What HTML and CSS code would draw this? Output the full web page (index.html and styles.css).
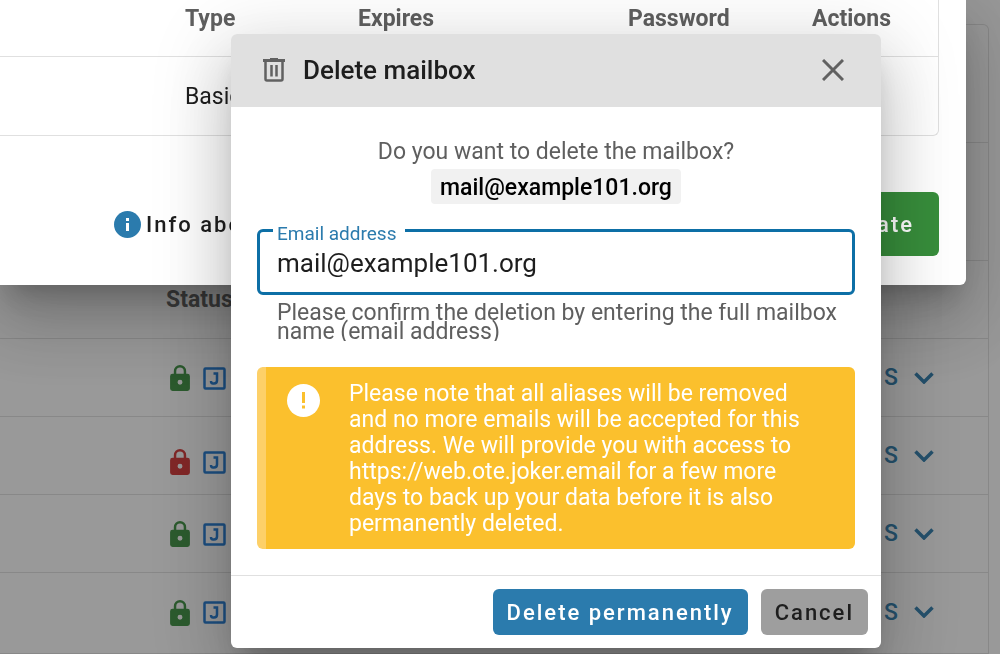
FILE: index.html
```html
<!DOCTYPE html>
<html lang="en">
<head>
    <meta charset="UTF-8">
    <meta name="viewport" content="width=device-width, initial-scale=1.0">
    <title>Delete mailbox</title>
    <link rel="stylesheet" href="styles.css">
</head>
<body>
    <!-- icons -->
    <svg class="sprite" aria-hidden="true">
        <symbol id="lock" viewBox="4 1 16 21">
            <path d="M12 17a2 2 0 0 0 0-4 2 2 0 0 0 0 4m6-9a2 2 0 0 1 2 2v10a2 2 0 0 1-2 2H6a2 2 0 0 1-2-2V10a2 2 0 0 1 2-2h1V6a5 5 0 0 1 10 0v2h1m-6-5a3 3 0 0 0-3 3v2h6V6a3 3 0 0 0-3-3z"/>
        </symbol>
        <symbol id="joker" viewBox="0 0 23 23">
            <rect x="1.5" y="1.5" width="20" height="20" rx="1" fill="none" stroke="currentColor" stroke-width="2.5"/>
            <path d="M10.5 6.5h3.5v7q0 3-3 3h-1q-2 0-2-2.5" fill="none" stroke="currentColor" stroke-width="2.5"/>
        </symbol>
        <symbol id="chevron" viewBox="0 0 20 12">
            <path d="M1.5 1.5 10 10l8.5-8.5" fill="none" stroke="currentColor" stroke-width="3.5"/>
        </symbol>
    </svg>

    <main class="page">
        <div class="domain-card">
            <div class="bar"></div>
            <div class="bar"></div>
            <table class="domains">
                <thead>
                    <tr>
                        <th>Status</th>
                        <th></th>
                    </tr>
                </thead>
                <tbody>
                    <tr>
                        <td class="status"><svg class="lock"><use href="#lock"/></svg><svg class="joker"><use href="#joker"/></svg></td>
                        <td class="actions"><button type="button" class="dns">DNS<svg class="chevron"><use href="#chevron"/></svg></button></td>
                    </tr>
                    <tr>
                        <td class="status unlocked"><svg class="lock"><use href="#lock"/></svg><svg class="joker"><use href="#joker"/></svg></td>
                        <td class="actions"><button type="button" class="dns">DNS<svg class="chevron"><use href="#chevron"/></svg></button></td>
                    </tr>
                    <tr>
                        <td class="status"><svg class="lock"><use href="#lock"/></svg><svg class="joker"><use href="#joker"/></svg></td>
                        <td class="actions"><button type="button" class="dns">DNS<svg class="chevron"><use href="#chevron"/></svg></button></td>
                    </tr>
                    <tr>
                        <td class="status"><svg class="lock"><use href="#lock"/></svg><svg class="joker"><use href="#joker"/></svg></td>
                        <td class="actions"><button type="button" class="dns">DNS<svg class="chevron"><use href="#chevron"/></svg></button></td>
                    </tr>
                </tbody>
            </table>
        </div>
    </main>

    <div class="scrim"></div>

    <!-- mailbox list dialog -->
    <div class="overlay">
        <section class="dialog mailboxes">
            <div class="table-wrap">
                <table>
                    <colgroup>
                        <col>
                        <col class="col-expires">
                        <col class="col-password">
                        <col class="col-actions">
                    </colgroup>
                    <thead>
                        <tr>
                            <th>Type</th>
                            <th>Expires</th>
                            <th>Password</th>
                            <th>Actions</th>
                        </tr>
                    </thead>
                    <tbody>
                        <tr>
                            <td>Basic</td>
                            <td></td>
                            <td></td>
                            <td></td>
                        </tr>
                    </tbody>
                </table>
            </div>
            <div class="mailboxes-footer">
                <a href="#info" class="info">
                    <svg width="27" height="27" viewBox="0 0 27 27">
                        <circle cx="13.5" cy="13.5" r="13.5" fill="#2b7bad"/>
                        <path d="M12 7h3v3h-3zM12 12h3v8h-3z" fill="#fff"/>
                    </svg>
                    Info about
                </a>
                <button type="button" class="btn create">Create</button>
            </div>
        </section>
    </div>

    <!-- delete confirmation -->
    <div class="overlay overlay-confirm">
        <form class="dialog confirm" role="dialog" aria-labelledby="confirm-title">
            <header class="confirm-header">
                <svg width="22" height="24" viewBox="0 0 22 24" fill="none" stroke="#616161">
                    <path d="M0 2.5h22" stroke-width="3"/>
                    <path d="M7 1h8" stroke-width="2"/>
                    <path d="M2.5 3v18a1.5 1.5 0 0 0 1.5 1.5h14a1.5 1.5 0 0 0 1.5-1.5V3" stroke-width="2.5"/>
                    <path d="M8.5 7v11.5M13.5 7v11.5" stroke-width="2.5"/>
                </svg>
                <h1 id="confirm-title">Delete mailbox</h1>
                <button type="button" class="close" aria-label="Close">
                    <svg width="22" height="22" viewBox="0 0 22 22">
                        <path d="M1 1l20 20M21 1 1 21" stroke="#616161" stroke-width="3"/>
                    </svg>
                </button>
            </header>
            <div class="confirm-body">
                <p class="question">Do you want to delete the mailbox?</p>
                <strong class="mailbox-name">mail@example101.org</strong>
                <div class="field">
                    <label for="email">Email address</label>
                    <input type="text" id="email" value="mail@example101.org" aria-describedby="email-hint">
                </div>
                <p class="hint" id="email-hint">Please confirm the deletion by entering the full mailbox name (email address)</p>
                <div class="alert" role="alert">
                    <svg width="33" height="33" viewBox="0 0 33 33">
                        <circle cx="16.5" cy="16.5" r="16.5" fill="#fff"/>
                        <path d="M15 8h3v11h-3zM15 21.5h3v3h-3z" fill="#fbc02d"/>
                    </svg>
                    <p>Please note that all aliases will be removed and no more emails will be accepted for this address. We will provide you with access to https://web.ote.joker.email for a few more days to back up your data before it is also permanently deleted.</p>
                </div>
            </div>
            <footer class="confirm-footer">
                <button type="submit" class="btn delete">Delete permanently</button>
                <button type="button" class="btn cancel">Cancel</button>
            </footer>
        </form>
    </div>
</body>
</html>
```

FILE: styles.css
```css
* {
    box-sizing: border-box;
}
body {
    margin: 0;
    min-height: 100vh;
    overflow: hidden;
    font-family: Roboto, sans-serif;
    font-size: 23px;
    color: #1e1e1e;
    background: #fff;
}
h1, p {
    margin: 0;
    font-weight: 400;
}
button {
    font-family: inherit;
    border: none;
    cursor: pointer;
}
table {
    width: 100%;
    border-spacing: 0;
}
th {
    text-align: left;
    font-size: 23px;
    font-weight: 700;
    color: #5f5f5f;
}
td, th {
    padding: 0;
}
.sprite {
    position: absolute;
    width: 0;
    height: 0;
}

/* page behind the dialogs */
.page {
    padding: 24px 11px 0 0;
}
.domain-card {
    padding-bottom: 2px;
    border: 1px solid #e0e0e0;
    border-left: none;
    border-radius: 0 6px 0 0;
}
.bar {
    height: 118px;
    border-bottom: 1px solid #e0e0e0;
}
.domains th, .domains td {
    height: 78px;
    border-bottom: 1px solid #e0e0e0;
}
.domains tr:last-child td {
    border-bottom: none;
}
.domains thead th {
    border-bottom: 1px solid #e0e0e0;
}
.domains th:first-child {
    padding-left: 166px;
}
.status {
    padding-left: 170px;
    color: #1976d2;
}
.status.unlocked {
    padding-top: 12px;
}
.status svg {
    vertical-align: middle;
}
.lock {
    width: 20px;
    height: 26px;
    margin-right: 13px;
    fill: #388e3c;
}
.unlocked .lock {
    fill: #d32f2f;
}
.joker {
    width: 23px;
    height: 23px;
}
.actions {
    text-align: right;
    padding-right: 54px;
}
.dns {
    padding: 0;
    background: none;
    color: #2b7bad;
    font-size: 23px;
    font-weight: 500;
    letter-spacing: 2px;
}
.chevron {
    width: 20px;
    height: 12px;
    margin: 0 0 2px 14px;
    vertical-align: middle;
}

/* dialogs */
.scrim {
    position: fixed;
    inset: 0;
    background: rgba(33, 33, 33, 0.46);
}
.overlay {
    position: fixed;
    inset: 0;
    padding-right: 34px;
}
.overlay-confirm {
    display: flex;
    justify-content: flex-end;
    align-items: flex-start;
    padding: 34px 119px 0 0;
}
.dialog {
    background: #fff;
    border-radius: 6px;
    box-shadow: 0 18px 24px -11px rgba(0, 0, 0, 0.2), 0 39px 62px 5px rgba(0, 0, 0, 0.14), 0 15px 75px 13px rgba(0, 0, 0, 0.12);
}
.btn {
    padding: 0 14px;
    height: 46px;
    border-radius: 6px;
    color: #fff;
    font-size: 22px;
    font-weight: 500;
    letter-spacing: 2px;
}

.mailboxes {
    padding-bottom: 29px;
    border-radius: 0 0 6px 0;
}
.table-wrap {
    margin-right: 27px;
    border-right: 1px solid #e0e0e0;
    border-bottom: 1px solid #e0e0e0;
    border-radius: 0 0 6px 0;
}
.mailboxes table {
    table-layout: fixed;
}
.col-expires {
    width: 270px;
}
.col-password {
    width: 184px;
}
.col-actions {
    width: 152px;
}
.mailboxes th {
    height: 57px;
    padding: 0 26px 20px;
    border-bottom: 1px solid #e0e0e0;
}
.mailboxes td {
    height: 78px;
}
.mailboxes th:first-child, .mailboxes td:first-child {
    padding-left: 185px;
}
.mailboxes-footer {
    display: flex;
    justify-content: space-between;
    align-items: center;
    margin-top: 56px;
    padding: 0 27px 0 114px;
}
.info {
    display: flex;
    align-items: center;
    gap: 5px;
    color: inherit;
    font-size: 22px;
    font-weight: 500;
    letter-spacing: 2px;
    text-decoration: none;
}
.create {
    height: 64px;
    padding: 0 25px;
    background: #388e3c;
}

.confirm {
    width: 650px;
    overflow: hidden;
}
.confirm-header {
    display: flex;
    align-items: center;
    gap: 18px;
    height: 73px;
    padding: 0 37px 1px 32px;
    background: #e0e0e0;
}
.confirm-header h1 {
    flex: 1;
    font-size: 26px;
    font-weight: 500;
}
.close {
    display: flex;
    padding: 0;
    background: none;
}
.confirm-body {
    display: flex;
    flex-direction: column;
    padding: 26px;
}
.question {
    padding-top: 2px;
    line-height: 34px;
    text-align: center;
    color: #5f5f5f;
}
.mailbox-name {
    align-self: center;
    padding: 2px 9px 0;
    border-radius: 4px;
    background: #f1f1f1;
    color: #000;
    font-weight: 500;
    line-height: 33px;
}
.field {
    position: relative;
    margin-top: 25px;
}
.field label {
    position: absolute;
    top: -6px;
    left: 16px;
    padding: 0 9px 0 4px;
    background: #fff;
    color: #2b7bad;
    font-size: 19px;
    line-height: 22px;
}
.field input {
    display: block;
    width: 100%;
    height: 66px;
    padding: 2px 17px 0;
    border: 3px solid #0d6fa6;
    border-radius: 6px;
    outline: none;
    color: #1e1e1e;
    font-family: inherit;
    font-size: 26px;
}
.hint {
    margin-top: 8px;
    padding-left: 20px;
    color: #5f5f5f;
    line-height: 19px;
    overflow: hidden;
}
.alert {
    display: flex;
    align-items: flex-start;
    gap: 29px;
    margin-top: 26px;
    padding: 14px 39px 12px 21px;
    border-left: 9px solid #fdd068;
    border-radius: 6px;
    background: #fbc02d;
    color: #fff;
}
.alert svg {
    flex: none;
    margin-top: 3px;
}
.alert p {
    line-height: 26px;
}
.confirm-footer {
    display: flex;
    justify-content: flex-end;
    gap: 13px;
    padding: 13px;
    border-top: 1px solid #e0e0e0;
}
.delete {
    background: #2b7bad;
}
.cancel {
    background: #9e9e9e;
    color: #1e1e1e;
}
```
